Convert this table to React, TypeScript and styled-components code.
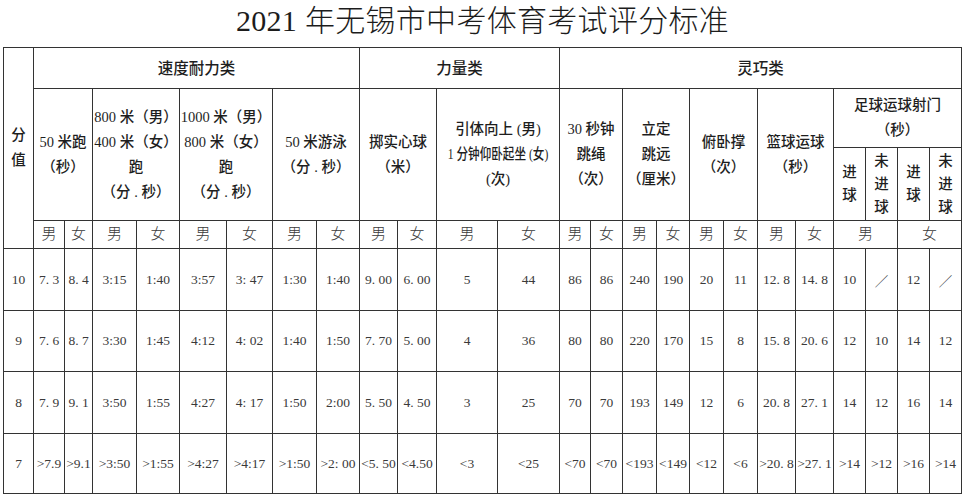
import React from "react";
import styled, { createGlobalStyle } from "styled-components";

const Global = createGlobalStyle`
  html, body { margin: 0; padding: 0; background: #ffffff; }
  body { font-family: "Liberation Serif", "Noto Sans CJK SC", serif; }
`;

const Page = styled.div`
  width: 966px;
  box-sizing: border-box;
  padding: 0 4px 0 3px;
  background: #fff;
`;

const Title = styled.h1`
  margin: 0;
  height: 47px;
  line-height: 42px;
  text-align: center;
  font-family: "Liberation Serif", "Noto Sans CJK SC", serif;
  font-weight: 300;
  font-size: 30px;
  color: #1c1c1c;
  letter-spacing: 0.3px;
`;

const ScoreTable = styled.table`
  border-collapse: collapse;
  table-layout: fixed;
  width: 958px;
  border: 1px solid #444;
`;

const Row = styled.tr<{ $h: number }>`
  height: ${(p) => p.$h}px;
`;

const HeadCell = styled.th<{ $kind?: "cat" | "head" | "gender" | "sub" }>`
  border: 1px solid #333;
  padding: 0;
  text-align: center;
  vertical-align: middle;
  font-family: "Liberation Serif", "Noto Sans CJK SC", serif;
  font-size: ${(p) => (p.$kind === "cat" ? "15.5px" : p.$kind === "gender" ? "15px" : "14.5px")};
  font-weight: ${(p) => (p.$kind === "gender" ? 300 : 500)};
  color: ${(p) => (p.$kind === "gender" ? "#3a3a3a" : "#1e1e1e")};
  line-height: ${(p) => (p.$kind === "sub" ? "23px" : "25px")};
  overflow: visible;
`;

const Line = styled.span<{ $squeeze?: number }>`
  display: block;
  white-space: nowrap;
  margin: 0 -30px;
  transform: scaleX(${(p) => p.$squeeze ?? 1});
`;

const DataCell = styled.td`
  border: 1px solid #333;
  padding: 0;
  text-align: center;
  vertical-align: middle;
  font-family: "Liberation Serif", "Noto Sans CJK SC", serif;
  font-size: 13.5px;
  color: #3a3a3a;
  white-space: nowrap;
  overflow: visible;
`;

const colWidths = [30, 31, 28, 44, 43, 47, 46, 44, 43, 38, 39, 61, 62, 31, 32, 34, 33, 34, 34, 38, 38, 32, 32, 32, 32];

type Item = { lines: (string | [string, number])[]; span?: number; rowSpan?: number };

const mainHeads: Item[] = [
  { lines: ["50 米跑", "（秒）"], span: 2, rowSpan: 2 },
  { lines: ["800 米（男）", "400 米（女）", "跑", "（分 . 秒）"], span: 2, rowSpan: 2 },
  { lines: ["1000 米（男）", "800 米（女）", "跑", "（分 . 秒）"], span: 2, rowSpan: 2 },
  { lines: ["50 米游泳", "（分 . 秒）"], span: 2, rowSpan: 2 },
  { lines: ["掷实心球", "（米）"], span: 2, rowSpan: 2 },
  { lines: ["引体向上 (男)", ["1 分钟仰卧起坐 (女)", 0.8], "(次)"], span: 2, rowSpan: 2 },
  { lines: ["30 秒钟", "跳绳", "（次）"], span: 2, rowSpan: 2 },
  { lines: ["立定", "跳远", "（厘米）"], span: 2, rowSpan: 2 },
  { lines: ["俯卧撑", "（次）"], span: 2, rowSpan: 2 },
  { lines: ["篮球运球", "（秒）"], span: 2, rowSpan: 2 },
  { lines: ["足球运球射门", "（秒）"], span: 4 },
];

const subHeads: string[][] = [["进", "球"], ["未", "进", "球"], ["进", "球"], ["未", "进", "球"]];

const genders: { t: string; span: number }[] = [
  ...Array.from({ length: 20 }, (_, i) => ({ t: i % 2 === 0 ? "男" : "女", span: 1 })),
  { t: "男", span: 2 },
  { t: "女", span: 2 },
];

const rows: { h: number; cells: string[] }[] = [
  {
    h: 62,
    cells: ["10", "7. 3", "8. 4", "3:15", "1:40", "3:57", "3: 47", "1:30", "1:40", "9. 00", "6. 00", "5", "44", "86", "86", "240", "190", "20", "11", "12. 8", "14. 8", "10", "／", "12", "／"],
  },
  {
    h: 61,
    cells: ["9", "7. 6", "8. 7", "3:30", "1:45", "4:12", "4: 02", "1:40", "1:50", "7. 70", "5. 00", "4", "36", "80", "80", "220", "170", "15", "8", "15. 8", "20. 6", "12", "10", "14", "12"],
  },
  {
    h: 62,
    cells: ["8", "7. 9", "9. 1", "3:50", "1:55", "4:27", "4: 17", "1:50", "2:00", "5. 50", "4. 50", "3", "25", "70", "70", "193", "149", "12", "6", "20. 8", "27. 1", "14", "12", "16", "14"],
  },
  {
    h: 60,
    cells: ["7", ">7.9", ">9.1", ">3:50", ">1:55", ">4:27", ">4:17", ">1:50", ">2: 00", "<5. 50", "<4.50", "<3", "<25", "<70", "<70", "<193", "<149", "<12", "<6", ">20. 8", ">27. 1", ">14", ">12", ">16", ">14"],
  },
];

const renderLines = (lines: (string | [string, number])[]) =>
  lines.map((l, i) =>
    typeof l === "string" ? (
      <Line key={i}>{l}</Line>
    ) : (
      <Line key={i} $squeeze={l[1]}>
        {l[0]}
      </Line>
    )
  );

export default function App() {
  return (
    <>
      <Global />
      <Page>
        <Title>2021 年无锡市中考体育考试评分标准</Title>
        <ScoreTable>
          <colgroup>
            {colWidths.map((w, i) => (
              <col key={i} style={{ width: w }} />
            ))}
          </colgroup>
          <thead>
            <Row $h={41}>
              <HeadCell $kind="head" rowSpan={4}>
                <Line>分</Line>
                <Line>值</Line>
              </HeadCell>
              <HeadCell $kind="cat" colSpan={8}>速度耐力类</HeadCell>
              <HeadCell $kind="cat" colSpan={4}>力量类</HeadCell>
              <HeadCell $kind="cat" colSpan={12}>灵巧类</HeadCell>
            </Row>
            <Row $h={59}>
              {mainHeads.map((h, i) => (
                <HeadCell key={i} $kind="head" colSpan={h.span} rowSpan={h.rowSpan}>
                  {renderLines(h.lines)}
                </HeadCell>
              ))}
            </Row>
            <Row $h={73}>
              {subHeads.map((s, i) => (
                <HeadCell key={i} $kind="sub">
                  {renderLines(s)}
                </HeadCell>
              ))}
            </Row>
            <Row $h={28}>
              {genders.map((g, i) => (
                <HeadCell key={i} $kind="gender" colSpan={g.span}>
                  {g.t}
                </HeadCell>
              ))}
            </Row>
          </thead>
          <tbody>
            {rows.map((r, ri) => (
              <Row key={ri} $h={r.h}>
                {r.cells.map((c, ci) => (
                  <DataCell key={ci}>{c}</DataCell>
                ))}
              </Row>
            ))}
          </tbody>
        </ScoreTable>
      </Page>
    </>
  );
}
